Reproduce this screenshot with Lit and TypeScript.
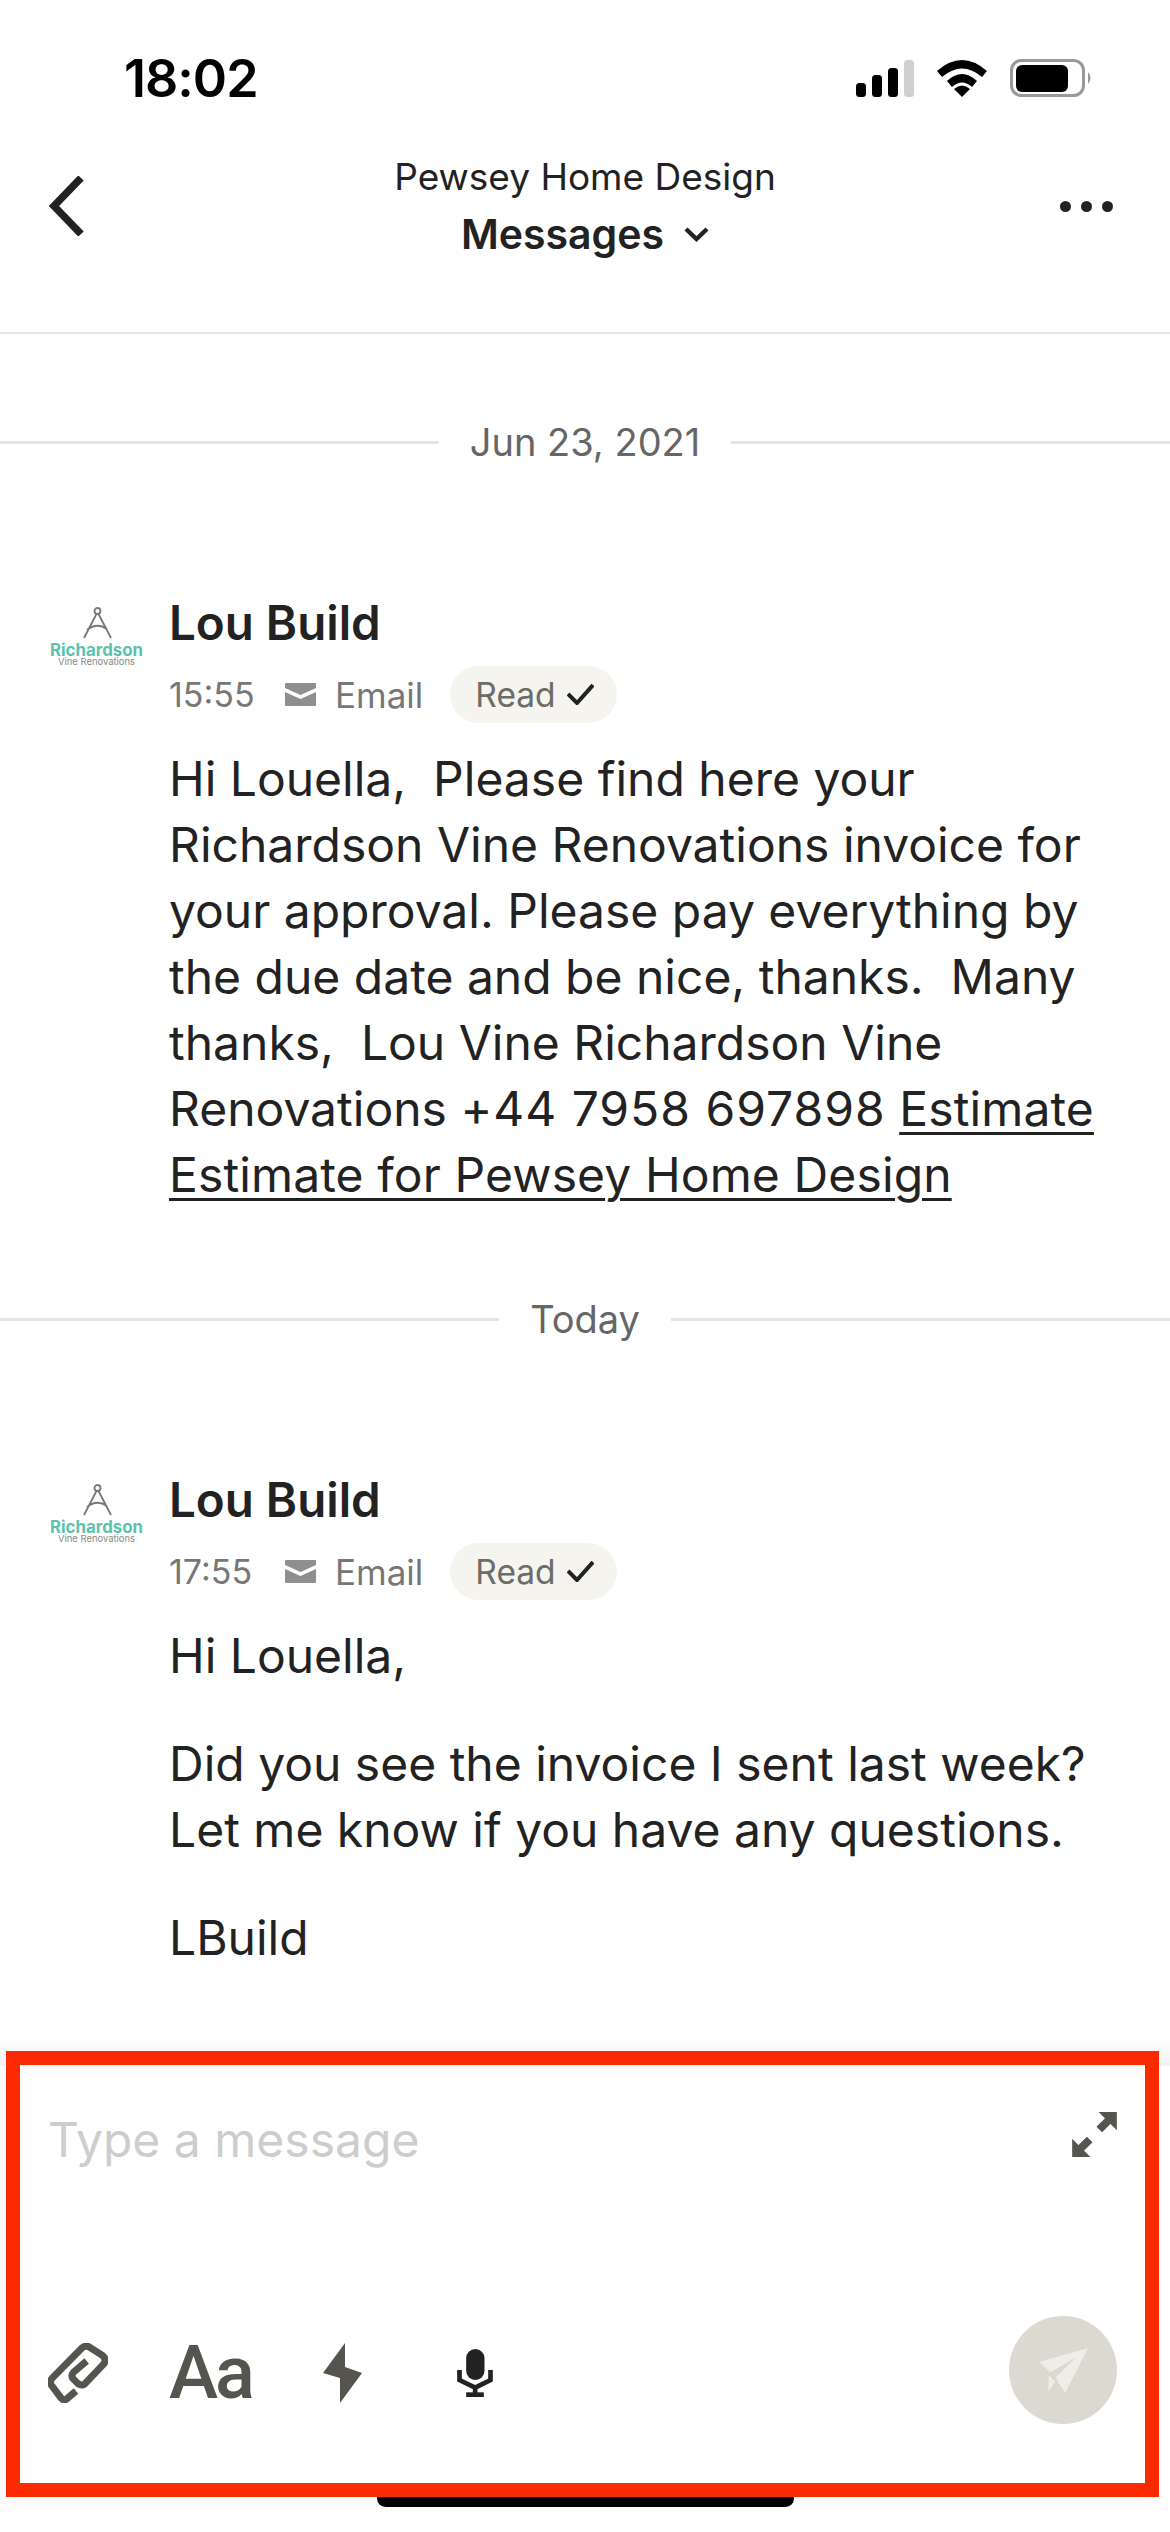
import { LitElement, html, css, svg } from "lit";
import { customElement } from "lit/decorators.js";

const check = svg`<path d="M1 10 L10 19 L26 1" fill="none" stroke="#222" stroke-width="4"/>`;

@customElement("app-root")
export class AppRoot extends LitElement {
  static styles = css`
    :host { display: block; width: 1170px; height: 2532px; position: relative; isolation: isolate; overflow: hidden; background: #fff; font-family: Inter, "Liberation Sans", sans-serif; color: #222; }
    .page { height: 2532px; display: flex; flex-direction: column; }
    .status { height: 156px; flex: none; display: flex; align-items: center; justify-content: space-between; padding: 0 78px 0 124px; box-sizing: border-box; }
    .time { font-size: 52px; font-weight: 600; color: #000; letter-spacing: -1px; }
    .sicons { display: flex; align-items: center; gap: 23px; }
    .header { height: 178px; flex: none; box-sizing: border-box; border-bottom: 2px solid #e6e6e6; display: grid; grid-template-columns: 150px 1fr 150px; align-items: start; }
    .back { padding: 20px 0 0 48px; display: block; }
    .more { padding: 45px 0 0 40px; display: block; }
    .htitle { display: flex; flex-direction: column; align-items: center; }
    .sub { font-size: 37px; line-height: 48px; margin-top: -3px; }
    .main { font-size: 41px; font-weight: 600; line-height: 60px; display: flex; align-items: center; gap: 20px; margin-top: 3px; }
    .content { flex: 1; min-height: 0; overflow: hidden; }
    .sep { display: flex; align-items: center; gap: 31px; height: 50px; font-size: 38px; color: #666; }
    .sep::before, .sep::after { content: ""; flex: 1; height: 3px; background: #e5e5e5; }
    .s1 { margin-top: 83px; }
    .s2 { margin-top: 86px; }
    .msg { display: flex; margin-top: 123px; padding-left: 50px; }
    .avatar { width: 119px; flex: none; padding-top: 17px; }
    .logo { display: block; }
    .body { flex: 1; padding-right: 29px; }
    .name { font-size: 47.5px; font-weight: 600; line-height: 60px; padding-top: 3px; }
    .meta { display: flex; align-items: center; height: 57px; margin-top: 13px; font-size: 35px; color: #777; }
    .time2 { width: 116px; font-size: 34px; }
    .env { margin-right: 19px; }
    .pill { display: flex; align-items: center; gap: 11px; height: 57px; margin-left: 27px; padding: 0 23px 0 25px; border-radius: 29px; background: #f5f4ef; color: #6d6d68; font-size: 33.5px; }
    .text { font-size: 48px; line-height: 66px; margin-top: 23px; }
    .text p { margin: 0 0 42px; }
    .text u { text-decoration-thickness: 3px; text-underline-offset: 6px; letter-spacing: 0.12px; }
    .phone { letter-spacing: 1px; }
    .composer { flex: none; height: 446px; margin: 0 11px 35px 6px; box-sizing: border-box; border: 14px solid #fb2a00; position: relative; display: flex; flex-direction: column; padding: 0 28px 0 28px; }
    .top { display: flex; justify-content: space-between; padding-top: 47px; align-items: flex-start; }
    .ph { font-size: 48px; line-height: 56px; color: #cdcdcd; }
    .tools { margin-top: auto; margin-bottom: 59px; display: flex; align-items: center; }
    .tool { margin-top: 6px; }
    .aa { font-family: Roboto, sans-serif; font-size: 74px; line-height: 74px; font-weight: 500; color: #55554d; margin-left: 61px; letter-spacing: -3px; }
    .bolt { margin-left: 71px; }
    .mic { margin-left: 95px; }
    .send { margin-left: auto; width: 108px; height: 108px; border-radius: 50%; background: #dcdad0; display: flex; align-items: center; justify-content: center; }
    .home { position: absolute; left: 377px; width: 417px; top: 2490px; height: 17px; background: #000; border-radius: 9px; z-index: -1; }
    .shade { position: absolute; left: 0; right: 0; top: 2036px; height: 30px; background: linear-gradient(#fff, #f3f3f3); z-index: -1; }
  `;

  private logo() {
    return html`<div class="avatar">
      <svg class="logo" width="96" height="60" viewBox="0 0 96 60" fill="none">
        <g stroke="#777" stroke-width="1.8"><circle cx="47.5" cy="4" r="3"/><path d="M46.5 7 L34 31 M48.5 7 L61 31 M37 23 Q47 15 57 22"/></g>
        <text x="0" y="49" font-size="17" font-weight="700" fill="#5cc2ab" stroke="none" textLength="93" lengthAdjust="spacingAndGlyphs">Richardson</text>
        <text x="8" y="58" font-size="9.5" fill="#888" stroke="none" textLength="77" lengthAdjust="spacingAndGlyphs">Vine Renovations</text>
      </svg>
    </div>`;
  }

  private meta(t: string) {
    return html`<div class="meta"><span class="time2">${t}</span>
      <svg class="env" width="31" height="23" viewBox="0 0 31 23"><path fill="#8f8f8f" d="M1 0 H30 Q31 0 31 1 V5 L15.5 12 L0 5 V1 Q0 0 1 0 Z M0 9 L15.5 16 L31 9 V22 Q31 23 30 23 H1 Q0 23 0 22 Z"/></svg>
      <span>Email</span>
      <span class="pill">Read <svg width="27" height="21" viewBox="0 0 27 21">${check}</svg></span></div>`;
  }

  render() {
    return html`<div class="page">
      <div class="status">
        <span class="time">18:02</span>
        <div class="sicons">
          <svg width="58" height="37" viewBox="0 0 58 37"><rect x="0" y="23" width="10" height="14" rx="3.5"/><rect x="16" y="15" width="10" height="22" rx="3.5"/><rect x="32" y="8" width="10" height="29" rx="3.5"/><rect x="48" y="0" width="10" height="37" rx="3.5" fill="#cfcfcf"/></svg>
          <svg width="50" height="37" viewBox="0 0 50 37"><path d="M0 11 Q25 -11 50 11 L45 17 Q25 0 5 17 Z M10 21 Q25 7 40 21 L35 27 Q25 18 15 27 Z M17 29 Q25 22 33 29 L25 37 Z"/></svg>
          <svg width="82" height="38" viewBox="0 0 82 38"><rect x="1.5" y="1.5" width="72" height="35" rx="10" fill="none" stroke="#999" stroke-width="3"/><rect x="6" y="6" width="52" height="27" rx="6"/><path d="M78 13 Q83 19 78 25 Z" fill="#999"/></svg>
        </div>
      </div>
      <div class="header">
        <svg class="back" width="36" height="60" viewBox="0 0 36 60" style="box-sizing:content-box"><path d="M33 2 L6 30 L33 58" fill="none" stroke="#222" stroke-width="7.5"/></svg>
        <div class="htitle">
          <div class="sub">Pewsey Home Design</div>
          <div class="main">Messages <svg width="25" height="15" viewBox="0 0 25 15"><path d="M2 2 L12.5 12 L23 2" fill="none" stroke="#222" stroke-width="4.4"/></svg></div>
        </div>
        <svg class="more" width="53" height="11" viewBox="0 0 53 11" style="box-sizing:content-box" fill="#222"><circle cx="5.5" cy="5.5" r="5.5"/><circle cx="26.5" cy="5.5" r="5.5"/><circle cx="47.5" cy="5.5" r="5.5"/></svg>
      </div>
      <div class="content">
        <div class="sep s1">Jun 23, 2021</div>
        <div class="msg">
          ${this.logo()}
          <div class="body">
            <div class="name">Lou Build</div>
            ${this.meta("15:55")}
            <div class="text">Hi Louella,&nbsp; Please find here your Richardson Vine Renovations invoice for your approval. Please pay everything by the due date and be nice, thanks.&nbsp; Many thanks,&nbsp; Lou Vine Richardson Vine Renovations <span class="phone">+44 7958 697898</span> <u>Estimate Estimate for Pewsey Home Design</u></div>
          </div>
        </div>
        <div class="sep s2">Today</div>
        <div class="msg">
          ${this.logo()}
          <div class="body">
            <div class="name">Lou Build</div>
            ${this.meta("17:55")}
            <div class="text"><p>Hi Louella,</p><p>Did you see the invoice I sent last week? Let me know if you have any questions.</p><p>LBuild</p></div>
          </div>
        </div>
      </div>
      <div class="composer">
        <div class="top">
          <span class="ph">Type a message</span>
          <svg width="45" height="45" viewBox="813 245 135 136" fill="#55554d"><path d="M893 245 H948 V300 Z M813 326 V381 H868 Z"/><path d="M927 266 L895 298 M834 360 L866 328" stroke="#55554d" stroke-width="24"/></svg>
        </div>
        <div class="tools">
          <svg class="tool" width="60" height="60" viewBox="24 24 180 180" fill="none" stroke="#55554d" stroke-width="21"><path d="M108 168 L80 192 Q72 198 64 190 L34 150 Q28 140 36 130 L125 40 Q135 30 148 36 L188 62 Q200 72 192 86 L135 146 Q125 154 114 146 L100 132 Q92 122 100 112 L140 78"/></svg>
          <span class="aa tool">Aa</span>
          <svg class="bolt tool" width="39" height="60" viewBox="0 0 39 60"><path fill="#55554d" d="M22 0 L0 30 L17 35 V60 L39 30 L22 24 Z"/></svg>
          <svg class="mic tool" width="36" height="48" viewBox="423 42 107 144" fill="#222"><rect x="450" y="42" width="55" height="93" rx="27"/><path d="M430 105 V135 L477 158 L523 135 V105" fill="none" stroke="#222" stroke-width="14"/><rect x="470" y="155" width="14" height="22"/><rect x="450" y="172" width="53" height="14"/></svg>
          <div class="send"><svg width="49" height="45" viewBox="712 948 146 134" fill="#eeede7"><path d="M858 948 L712 990 L746 1020 L822 976 L762 1036 L790 1082 Z M741 1030 L760 1048 L740 1078 Z"/></svg></div>
        </div>
      </div>
    </div>
    <div class="home"></div><div class="shade"></div>`;
  }
}
